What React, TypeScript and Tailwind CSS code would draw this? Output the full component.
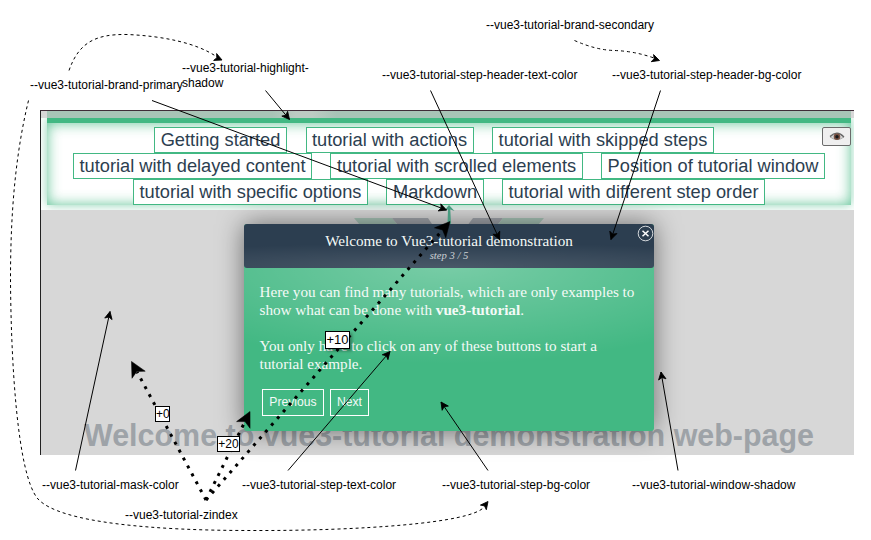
import React from 'react';

type Pt = [number, number];

function Head({ from, to, size }: { from: Pt; to: Pt; size: number }) {
  const angle = (Math.atan2(to[1] - from[1], to[0] - from[0]) * 180) / Math.PI;
  return (
    <path
      d={`M0 0L${-size} ${size / 2}L${-size * 0.75} 0L${-size} ${-size / 2}Z`}
      transform={`translate(${to[0]} ${to[1]}) rotate(${angle})`}
      fill="#000"
      stroke="#000"
      strokeWidth={size > 10 ? 0.5 : 0.8}
    />
  );
}

const solid: [Pt, Pt][] = [
  [[265.5, 90.5], [289.5, 119.5]],
  [[152, 100.5], [446.5, 210]],
  [[430.5, 90.5], [499.5, 239.5]],
  [[660.5, 90.5], [611, 239.5]],
  [[75.5, 470.5], [110, 311.5]],
  [[288, 470.5], [390, 351.5]],
  [[488, 470.5], [441, 402]],
  [[678, 470.5], [661, 372]],
];

const dotted: [Pt, Pt][] = [
  [[206, 500], [131.5, 361.5]],
  [[206, 500], [250, 411.5]],
  [[206, 500], [450, 221.5]],
];

const curves: { d: string; from: Pt; to: Pt }[] = [
  { d: 'M69 70.5C79 42 96 34 127 34.5C163 36 197 43 217 57', from: [206, 53], to: [222, 60] },
  { d: 'M28.5 100.5C14 160 10.5 222 10.5 280C11 360 17 475 38 499C60 523 155 530.5 250 530.5C360 531 472 523 484 507', from: [479, 513], to: [488, 501.5] },
  { d: 'M574.5 40.5Q596 50 614 50.5Q634 51 654 58', from: [640, 54], to: [659.5, 60.5] },
];

const rows = [
  [['Getting started', 'w-[133px]'], ['tutorial with actions', 'w-[168px]'], ['tutorial with skipped steps', 'w-[222px]']],
  [['tutorial with delayed content', 'w-[239px]'], ['tutorial with scrolled elements', 'w-[253px]'], ['Position of tutorial window', 'w-[224px]']],
  [['tutorial with specific options', 'w-[235px]'], ['Markdown', 'w-[98px]'], ['tutorial with different step order', 'w-[263px]']],
];

const labels: [string, string][] = [
  ['--vue3-tutorial-brand-secondary', 'left-[486px] top-[18px]'],
  ['--vue3-tutorial-brand-primary', 'left-[30px] top-[78px]'],
  ['--vue3-tutorial-highlight-\nshadow', 'left-[182px] top-[61px]'],
  ['--vue3-tutorial-step-header-text-color', 'left-[382px] top-[68px]'],
  ['--vue3-tutorial-step-header-bg-color', 'left-[612px] top-[68px]'],
  ['--vue3-tutorial-mask-color', 'left-[42px] top-[478px]'],
  ['--vue3-tutorial-zindex', 'left-[125px] top-[508px]'],
  ['--vue3-tutorial-step-text-color', 'left-[242px] top-[478px]'],
  ['--vue3-tutorial-step-bg-color', 'left-[442px] top-[478px]'],
  ['--vue3-tutorial-window-shadow', 'left-[632px] top-[478px]'],
];

function Page() {
  return (
    <div className="ml-10 flex h-[345px] w-[814px] flex-col overflow-hidden border-t border-l border-t-[#402c38] border-l-[#222] bg-[#d7d7d7]">
      <div className="ml-1.5 h-[7px] w-[804px] shrink-0 bg-[linear-gradient(90deg,#a8c4b7_28%,#bccbc3_31%,#bccbc3_33%,#a8c4b7_36%)]" />
      <div className="h-[92px] shrink-0 overflow-hidden bg-white pr-[3px] pl-1.5">
        <div className="relative flex h-[87px] flex-col border-t-[5px] border-[#42b883] pt-1 shadow-[0_0_10px_rgba(66,184,131,0.6),inset_0_0_14px_rgba(66,184,131,0.85)]">
          {rows.map((row, i) => (
            <div key={i} className={`flex h-[26px] justify-center ${i === 0 ? 'gap-x-[18.5px] pr-[30px]' : 'gap-x-[18px]'}`}>
              {row.map(([text, width]) => (
                <button key={text} className={`${width} h-[26px] shrink-0 border border-[#42b883] bg-white text-[18.24px] leading-[24px] whitespace-nowrap text-[#2c3e50]`}>
                  {text}
                </button>
              ))}
            </div>
          ))}
          <button className="absolute top-1 right-0 flex h-[19px] w-[29px] items-center justify-center rounded-[2px] border border-[#6b6b6b] bg-[#efefef]">
            <svg width="16" height="12" viewBox="0 0 16 12">
              <path d="M1 6Q8-.5 15 6Q8 11 1 6Z" fill="#d8d8d8" stroke="#999" strokeWidth=".8" />
              <path d="M1 5.5Q8-1.5 15 6" fill="none" stroke="#666" strokeWidth="1.2" />
              <circle cx="8" cy="5.8" r="3.3" fill="#775041" />
              <circle cx="8" cy="5.8" r="1.7" fill="#17191c" />
            </svg>
          </button>
        </div>
      </div>
      <div className="flex flex-1 flex-col justify-between">
        <svg className="mt-2 ml-[313px] block" width="190" height="68" viewBox="0 0 190 68">
          <path d="M0 0H38L95 68H58Z" fill="#a8c4b7" />
          <path d="M38 0H74L95 32L119 0H149L95 68Z" fill="#a2a6ac" />
          <path d="M149 0H190L132 68H95Z" fill="#a8c4b7" />
        </svg>
        <h1 className="mb-[2px] ml-[43px] text-[30.45px] leading-[36px] font-bold whitespace-nowrap text-[#9ea3a8]">
          Welcome to vue3-tutorial demonstration web-page
        </h1>
      </div>
    </div>
  );
}

function StepWindow() {
  return (
    <section className="absolute top-[224px] left-[244px] h-[207px] w-[410px] rounded-[3px] bg-[#42b883] bg-[radial-gradient(ellipse_330px_100px_at_50%_40px,rgba(255,255,255,0.29),transparent)] font-['Liberation_Serif','Times_New_Roman',serif] text-[#f4faf7] shadow-[0_0_26px_rgba(0,0,0,0.5)]">
      <header className="relative h-[44px] rounded-[3px] bg-[#2c3e50] bg-[radial-gradient(ellipse_400px_25px_at_50%_100%,rgba(255,255,255,0.14),transparent)] pt-[8px] text-center">
        <div className="text-[15.2px] leading-[18px]">Welcome to Vue3-tutorial demonstration</div>
        <div className="text-[10.65px] leading-[11px] text-[#ccd1d6] italic">step 3 / 5</div>
        <svg className="absolute top-[1px] right-0" width="17" height="17" viewBox="0 0 17 17" fill="none" stroke="#fff">
          <circle cx="8.5" cy="8.5" r="7.3" strokeWidth=".8" />
          <path d="M5.5 5.7L11.5 11.3M11.5 5.7L5.5 11.3" strokeWidth="1.5" />
        </svg>
      </header>
      <div className="pt-[15px] pl-[15.5px] text-[15.2px] leading-[18px] whitespace-nowrap">
        <p>Here you can find many tutorials, which are only examples to<br />show what can be done with <b>vue3-tutorial</b>.</p>
        <p className="mt-[18px]">You only have to click on any of these buttons to start a<br />tutorial example.</p>
      </div>
      <div className="mt-4 ml-[18px] flex gap-1.5 font-['Liberation_Sans',Arial,sans-serif] text-[12.16px]">
        <button className="h-[27px] w-[62px] border border-white">Previous</button>
        <button className="h-[27px] w-[39px] border border-white">Next</button>
      </div>
    </section>
  );
}

export default function App() {
  return (
    <main className="relative h-[540px] w-[871px] overflow-hidden bg-white pt-[110px] font-['Liberation_Sans',Arial,sans-serif]">
      <Page />
      <StepWindow />
      <svg className="absolute inset-0" width="871" height="540" viewBox="0 0 871 540">
        <path d="M449 205L454.5 211L450.3 209.5L451 224H447.5L448 209.5L444 211Z" fill="#4a9b80" />
        {solid.map(([a, b], i) => (
          <g key={i}>
            <line x1={a[0]} y1={a[1]} x2={b[0]} y2={b[1]} stroke="#000" />
            <Head from={a} to={b} size={7.5} />
          </g>
        ))}
        {curves.map((c, i) => (
          <g key={i}>
            <path d={c.d} fill="none" stroke="#000" strokeDasharray="3 3" />
            <Head from={c.from} to={c.to} size={7.5} />
          </g>
        ))}
        {dotted.map(([a, b], i) => {
          const l = Math.hypot(b[0] - a[0], b[1] - a[1]);
          const k = (l - 12) / l;
          return (
            <g key={i}>
              <line x1={a[0]} y1={a[1]} x2={a[0] + (b[0] - a[0]) * k} y2={a[1] + (b[1] - a[1]) * k} stroke="#000" strokeWidth="3" strokeDasharray="3 6" />
              <Head from={a} to={b} size={15} />
            </g>
          );
        })}
      </svg>
      {labels.map(([text, place]) => (
        <span key={text} className={`absolute ${place} text-[12px] leading-[15px] whitespace-pre text-black`}>{text}</span>
      ))}
      <span className="absolute top-[406px] left-[155px] h-4 w-[15px] border border-black bg-white text-center text-[12px] leading-[14px]">+0</span>
      <span className="absolute top-[436px] left-[217px] h-4 w-[23px] border border-black bg-white text-center text-[12px] leading-[14px]">+20</span>
      <span className="absolute top-[331px] left-[325px] h-[18px] w-[25px] border border-black bg-white text-center text-[13px] leading-[16px] shadow-[2px_2px_3px_rgba(0,0,0,0.35)]">+10</span>
    </main>
  );
}
